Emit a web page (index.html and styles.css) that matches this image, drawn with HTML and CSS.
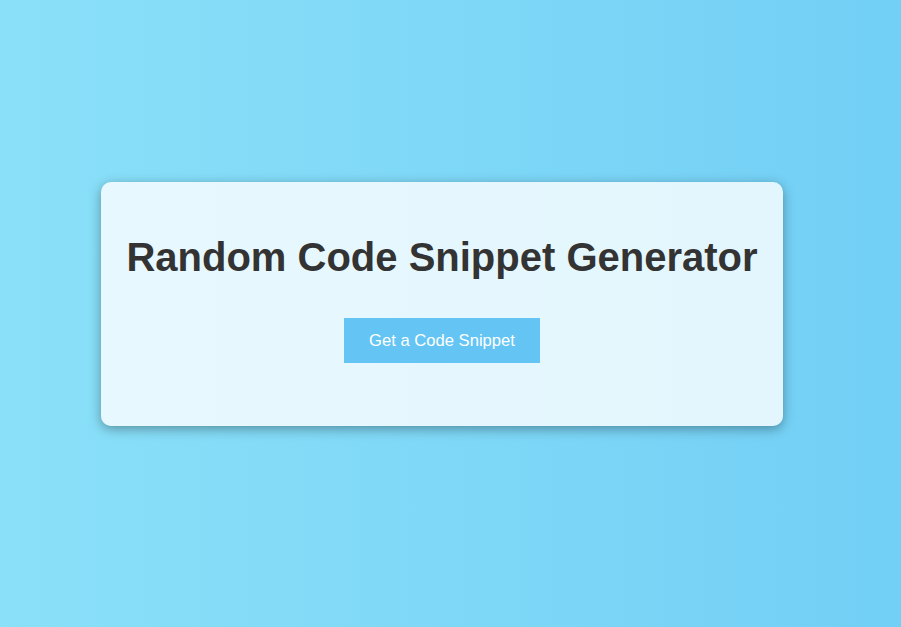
FILE: index.html
```html
<!DOCTYPE html>
<html lang="en">
<head>
<meta charset="utf-8">
<title>Random Code Snippet Generator</title>
<link rel="stylesheet" href="styles.css">
</head>
<body>
  <main class="card">
    <h1 class="title">Random Code Snippet Generator</h1>
    <button class="btn" type="button">Get a Code Snippet</button>
  </main>
</body>
</html>
```

FILE: styles.css
```css
html, body {
  margin: 0;
  height: 100%;
}
body {
  background: linear-gradient(to right, #8ae0f8, #72cff5);
  font-family: "Liberation Sans", Arial, sans-serif;
  padding: 182px 0 0 101px;
  box-sizing: border-box;
}
.card {
  width: 682px;
  height: 244px;
  box-sizing: border-box;
  background: rgba(255, 255, 255, 0.8);
  border-radius: 10px;
  box-shadow: 0 3px 12px rgba(0, 0, 0, 0.35);
  padding-top: 52px;
  display: flex;
  flex-direction: column;
  align-items: center;
}
.title {
  margin: 0;
  font-size: 40px;
  font-weight: bold;
  color: #333333;
  line-height: 46px;
}
.btn {
  margin-top: 38px;
  border: none;
  background: #64c5f4;
  color: #ffffff;
  font-family: "Liberation Sans", Arial, sans-serif;
  font-size: 16.6px;
  line-height: 21px;
  padding: 12px 0;
  width: 196px;
  cursor: pointer;
}
```
